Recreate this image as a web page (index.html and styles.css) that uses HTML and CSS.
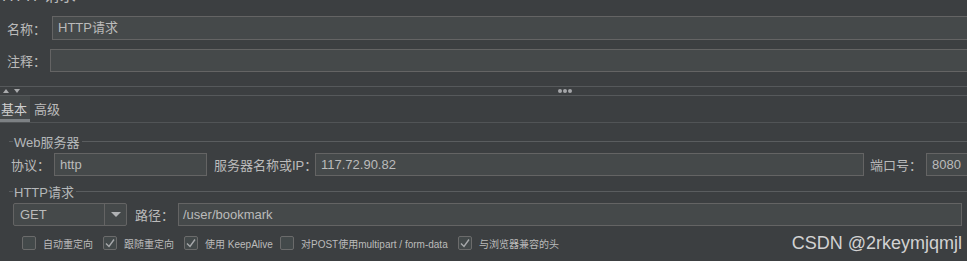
FILE: index.html
```html
<!DOCTYPE html>
<html lang="zh-CN">
<head>
    <meta charset="UTF-8">
    <title>HTTP请求</title>
    <link rel="stylesheet" href="styles.css">
</head>
<body>
    <div class="title"><span>HTTP请求</span></div>

    <div class="field-row name-row">
        <label class="label name-label">名称：</label>
        <div class="input wide">HTTP请求</div>
    </div>
    <div class="field-row comment-row">
        <label class="label comment-label">注释：</label>
        <div class="input wide"></div>
    </div>

    <div class="splitter">
        <div class="arrows">
            <svg width="20" height="6" viewBox="0 0 20 6"><path d="M2 5 L5 1 L8 5 Z M13 1 L19 1 L16 5 Z" fill="#a9abad"/></svg>
        </div>
        <div class="dots"><i></i><i></i><i></i></div>
    </div>

    <div class="tabs">
        <div class="tab active">基本</div>
        <div class="tab">高级</div>
    </div>

    <div class="group-title"><span class="dash"></span><span class="legend">Web服务器</span><span class="rule"></span></div>
    <div class="field-row server-row">
        <label class="label proto-label">协议：</label>
        <div class="input proto">http</div>
        <label class="label host-label">服务器名称或IP：</label>
        <div class="input host">117.72.90.82</div>
        <label class="label port-label">端口号：</label>
        <div class="input port">8080</div>
    </div>

    <div class="group-title second"><span class="dash"></span><span class="legend">HTTP请求</span><span class="rule"></span></div>
    <div class="field-row request-row">
        <div class="combo">
            <span class="combo-value">GET</span>
            <span class="combo-button">
                <svg width="10" height="6" viewBox="0 0 10 6"><path d="M0 0 L10 0 L5 5 Z" fill="#b0b2b4"/></svg>
            </span>
        </div>
        <label class="label path-label">路径：</label>
        <div class="input path">/user/bookmark</div>
    </div>

    <div class="checks">
        <div class="check redirect"><span class="box"></span>自动重定向</div>
        <div class="check follow"><span class="box checked"><svg width="12" height="12" viewBox="0 0 12 12"><path d="M2 6.5 L5 9.5 L10 2.5" fill="none" stroke="#a7a9ab" stroke-width="1.4"/></svg></span>跟随重定向</div>
        <div class="check keepalive"><span class="box checked"><svg width="12" height="12" viewBox="0 0 12 12"><path d="M2 6.5 L5 9.5 L10 2.5" fill="none" stroke="#a7a9ab" stroke-width="1.4"/></svg></span>使用 KeepAlive</div>
        <div class="check multipart"><span class="box"></span>对POST使用multipart / form-data</div>
        <div class="check browser"><span class="box checked"><svg width="12" height="12" viewBox="0 0 12 12"><path d="M2 6.5 L5 9.5 L10 2.5" fill="none" stroke="#a7a9ab" stroke-width="1.4"/></svg></span>与浏览器兼容的头</div>
    </div>

    <div class="watermark">CSDN @2rkeymjqmjl</div>
</body>
</html>
```

FILE: styles.css
```css
html, body {
    margin: 0;
    padding: 0;
    overflow: hidden;
}
body {
    position: relative;
    width: 967px;
    height: 261px;
    background: #3c3f41;
    color: #bbbbbb;
    font-family: "Liberation Sans", "Noto Sans CJK SC", sans-serif;
    font-size: 13px;
}
.title {
    height: 16px;
    overflow: hidden;
}
.title span {
    display: block;
    margin-top: -14px;
    padding-left: 2px;
    font-size: 16px;
    line-height: 20px;
}
.field-row {
    display: flex;
    align-items: center;
    height: 24px;
}
.label {
    flex: none;
    white-space: nowrap;
}
.input {
    flex: none;
    box-sizing: border-box;
    height: 100%;
    padding: 0 5px;
    background: #45494a;
    border: 1px solid #646464;
    line-height: 22px;
    color: #bbbbbb;
    white-space: nowrap;
}
.input.wide {
    flex: 1;
    margin-right: -10px;
}
.name-row {
    padding-left: 7px;
}
.name-label {
    width: 45px;
}
.comment-row {
    margin-top: 9px;
    height: 23px;
    padding-left: 7px;
}
.comment-label {
    width: 43px;
}

/* splitter */
.splitter {
    position: relative;
    margin-top: 14px;
    height: 8px;
    border-top: 1px solid #56595b;
    border-bottom: 1px solid #56595b;
}
.arrows {
    position: absolute;
    left: 1px;
    top: 1px;
    line-height: 0;
}
.dots {
    position: absolute;
    left: 558px;
    top: 2px;
    display: flex;
    gap: 1px;
}
.dots i {
    width: 4px;
    height: 4px;
    border-radius: 50%;
    background: #a4a6a8;
}

/* tabs */
.tabs {
    display: flex;
    height: 26px;
    border-bottom: 1px solid #515456;
}
.tab {
    box-sizing: border-box;
    height: 26px;
    padding: 0 4px;
    line-height: 27px;
    font-size: 13px;
    white-space: nowrap;
}
.tab.active {
    width: 30px;
    padding: 0 0 0 1px;
    background: #45494a;
    border-bottom: 3px solid #7d8184;
    color: #d0d0d0;
}

/* titled groups */
.group-title {
    display: flex;
    align-items: center;
    height: 14px;
    margin-top: 11px;
    padding-left: 9px;
}
.group-title.second {
    margin-top: 8px;
}
.dash {
    width: 4px;
    border-top: 1px solid #5a5d5f;
}
.rule {
    flex: 1;
    border-top: 1px solid #5a5d5f;
}
.legend {
    padding: 0 2px 0 1px;
    font-size: 13px;
    color: #b5b8ba;
}
.server-row {
    margin-top: 5px;
    height: 23px;
    padding-left: 11px;
}
.proto-label {
    width: 43px;
}
.input.proto {
    width: 153px;
}
.host-label {
    margin-left: 7px;
    width: 101px;
}
.input.host {
    width: 549px;
}
.port-label {
    margin-left: 6px;
    width: 56px;
}
.input.port {
    width: 60px;
}

.request-row {
    margin-top: 5px;
    height: 23px;
    padding-left: 13px;
    padding-right: 5px;
}
.combo {
    box-sizing: border-box;
    display: flex;
    width: 114px;
    height: 100%;
    background: #45494a;
    border: 1px solid #646464;
    border-radius: 2px;
}
.combo-value {
    flex: 1;
    padding-left: 6px;
    line-height: 21px;
}
.combo-button {
    width: 21px;
    border-left: 1px solid #646464;
    display: flex;
    align-items: center;
    justify-content: center;
}
.path-label {
    margin-left: 8px;
    width: 43px;
}
.input.path {
    flex: 1;
    padding-left: 4px;
}

/* checkboxes */
.checks {
    display: flex;
    align-items: center;
    margin-top: 10px;
    padding-left: 22px;
    height: 14px;
    font-size: 10px;
}
.check {
    flex: none;
    display: flex;
    align-items: center;
    white-space: nowrap;
}
.check.redirect,
.check.follow {
    width: 81px;
}
.check.keepalive {
    width: 96px;
}
.check.multipart {
    width: 178px;
}
.box {
    box-sizing: border-box;
    width: 14px;
    height: 14px;
    margin-right: 7px;
    background: #43494a;
    border: 1px solid #6b6b6b;
    border-radius: 2px;
    display: flex;
    align-items: center;
    justify-content: center;
}

.watermark {
    position: absolute;
    right: 5px;
    top: 232px;
    font-size: 18px;
    line-height: 22px;
    color: #d2d2d2;
    font-family: "Liberation Sans", sans-serif;
}
```
